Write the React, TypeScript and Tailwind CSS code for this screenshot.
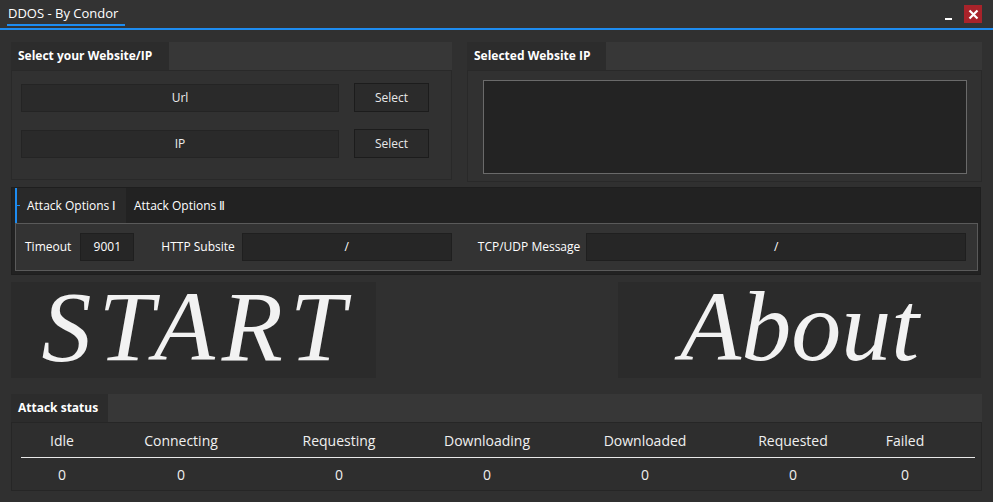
// DDOS - By Condor: janela principal recriada em Tailwind
const ui = { fontFamily: '"Open Sans", "Noto Sans", sans-serif' };
const serif = { fontFamily: '"Liberation Serif", "DejaVu Serif", serif' };

const columns = [
  { label: 'Idle', w: 'w-[82px]' },
  { label: 'Connecting', w: 'w-[156px]' },
  { label: 'Requesting', w: 'w-[160px]' },
  { label: 'Downloading', w: 'w-[136px]' },
  { label: 'Downloaded', w: 'w-[180px]' },
  { label: 'Requested', w: 'w-[116px]' },
  { label: 'Failed', w: 'w-[108px]' },
];

function GroupHeader({ title, w }: { title: string; w: string }) {
  return (
    <div className="flex h-[28px] bg-[#373737]">
      <div className={`${w} bg-[#2c2c2c] flex items-center pl-[7px] text-[12px] font-bold text-white`}>
        {title}
      </div>
    </div>
  );
}

function Field({ text, w }: { text: string; w: string }) {
  return (
    <div className={`${w} h-[28px] bg-[#2a2a2a] border border-[#242424] flex items-center justify-center text-[12px] text-[#eeeeee]`}>
      {text}
    </div>
  );
}

function SelectButton() {
  return (
    <div className="w-[75px] h-[29px] bg-[#2b2b2b] border border-[#1c1c1c] flex items-center justify-center text-[12px] text-[#e8e8e8]">
      Select
    </div>
  );
}

export default function App() {
  return (
    <div className="w-[993px] h-[502px] bg-[#303030] overflow-hidden select-none" style={ui}>
      {/* Barra de título */}
      <div className="h-[30px] bg-[#333333] border-b-2 border-[#1e8cf0] relative flex items-start">
        <div className="ml-[7px] w-[118px] h-[26px] border-b-2 border-[#1e8cf0] pl-[1px] pt-[3px] flex items-center text-[13px] text-white">
          DDOS - By Condor
        </div>
        <div className="absolute left-[945px] top-[18px] w-[7px] h-[2px] bg-white" />
        <div className="absolute left-[964px] top-[5px] w-[18px] h-[18px] bg-[#a8232a] flex items-center justify-center">
          <svg width="11" height="11" viewBox="0 0 11 11">
            <path d="M1.5 1.5 L9.5 9.5 M9.5 1.5 L1.5 9.5" stroke="white" strokeWidth="2.2" />
          </svg>
        </div>
      </div>

      <div className="pl-[11px] pr-[11px] pt-[12px] flex flex-col">
        {/* Linha 1: seleção + IP selecionado */}
        <div className="flex gap-[15px]">
          <div className="w-[441px] flex flex-col">
            <GroupHeader title="Select your Website/IP" w="w-[158px]" />
            <div className="h-[110px] bg-[#313131] border border-[#292929] pl-[9px] pt-[12px] flex flex-col gap-[17px]">
              <div className="flex items-center gap-[15px]">
                <Field text="Url" w="w-[318px]" />
                <SelectButton />
              </div>
              <div className="flex items-center gap-[15px]">
                <Field text="IP" w="w-[318px]" />
                <SelectButton />
              </div>
            </div>
          </div>
          <div className="flex-1 flex flex-col">
            <GroupHeader title="Selected Website IP" w="w-[139px]" />
            <div className="h-[112px] bg-[#313131] border border-[#292929] pl-[15px] pr-[14px] pt-[9px]">
              <div className="h-[94px] bg-[#232323] border border-[#6a6a6a]" />
            </div>
          </div>
        </div>

        {/* Opções de ataque */}
        <div className="mt-[5px] mr-[1px] h-[88px] bg-[#222222] border border-[#1e1e1e] pl-[3px] pr-[2px] flex flex-col">
          <div className="flex h-[35px] text-[12px] text-white">
            <div className="w-[111px] bg-[#292929] border-l-2 border-[#1e8cf0] flex items-center relative">
              <div className="absolute left-[0px] top-[17px] w-[3px] h-[1px] bg-[#1e8cf0]" />
              <span className="pl-[10px]">Attack Options Ⅰ</span>
            </div>
            <div className="flex items-center pl-[8px]">Attack Options Ⅱ</div>
          </div>
          <div className="h-[48px] bg-[#333333] border border-[#5a5a5a] flex items-center text-[12px] text-white">
            <span className="ml-[9px]">Timeout</span>
            <div className="ml-[9px] w-[54px] h-[28px] bg-[#262626] border border-[#1f1f1f] flex items-center justify-center">9001</div>
            <span className="ml-[27px]">HTTP Subsite</span>
            <div className="ml-[7px] w-[210px] h-[28px] bg-[#262626] border border-[#1f1f1f] flex items-center justify-center">/</div>
            <span className="ml-[26px]">TCP/UDP Message</span>
            <div className="ml-[6px] w-[380px] h-[28px] bg-[#262626] border border-[#1f1f1f] flex items-center justify-center">/</div>
          </div>
        </div>

        {/* Botões grandes */}
        <div className="mt-[7px] flex justify-between">
          <div className="w-[365px] h-[96px] bg-[#2b2b2b] flex items-center justify-center pb-[6px] pl-[7px]">
            <span className="italic text-[100px] leading-none text-[#f2f2f2] tracking-[7px]" style={serif}>START</span>
          </div>
          <div className="w-[363px] mr-[1px] h-[96px] bg-[#2b2b2b] flex items-center justify-center pb-[6px]">
            <span className="italic text-[100px] leading-none text-[#f2f2f2]" style={serif}>About</span>
          </div>
        </div>

        {/* Status do ataque */}
        <div className="mt-[16px] flex flex-col">
          <GroupHeader title="Attack status" w="w-[97px]" />
          <div className="h-[69px] bg-[#2e2e2e] border border-[#262626] pl-[9px] pr-[6px] text-[14px] text-[#f0f0f0]">
            <div className="flex h-[35px] items-center border-b border-[#e8e8e8]">
              {columns.map((c) => (
                <div key={c.label} className={`${c.w} text-center`}>{c.label}</div>
              ))}
            </div>
            <div className="flex h-[32px] items-center">
              {columns.map((c) => (
                <div key={c.label} className={`${c.w} text-center`}>0</div>
              ))}
            </div>
          </div>
        </div>
      </div>
    </div>
  );
}
